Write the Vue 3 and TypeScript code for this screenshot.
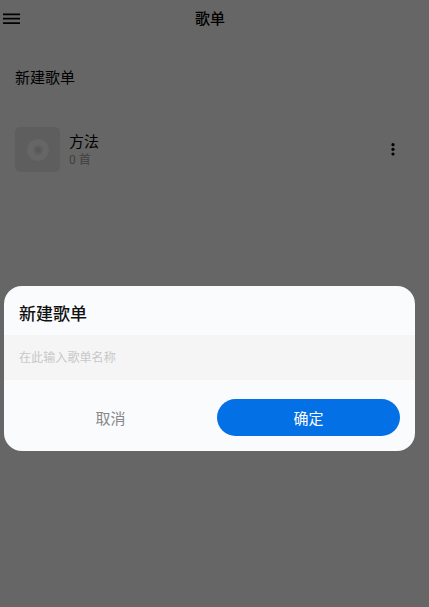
<script setup lang="ts">
interface Playlist { name: string; count: number }
const playlists: Playlist[] = [{ name: '方法', count: 0 }]
</script>

<template>
  <div class="page">
    <header class="header">
      <svg class="menu" width="24" height="24" viewBox="0 0 24 24">
        <path d="M3 7.3h17M3 11.7h17M3 16.2h17" stroke="#000" stroke-width="1.7" fill="none" />
      </svg>
      <h1 class="title">歌单</h1>
    </header>
    <div class="new-row">新建歌单</div>
    <ul class="list">
      <li v-for="p in playlists" :key="p.name" class="item">
        <div class="cover">
          <svg width="24" height="24" viewBox="0 0 24 24">
            <circle cx="12" cy="12" r="10.8" fill="#fff" />
            <circle cx="12" cy="12" r="4.8" fill="#ebebeb" />
            <circle cx="12" cy="12" r="2.4" fill="#dcdcdc" />
          </svg>
        </div>
        <div class="meta">
          <div class="name">{{ p.name }}</div>
          <div class="count">{{ p.count }} 首</div>
        </div>
        <svg class="more" width="6" height="16" viewBox="0 0 6 16">
          <circle cx="3" cy="2.7" r="1.6" fill="#000" />
          <circle cx="3" cy="7.3" r="1.6" fill="#000" />
          <circle cx="3" cy="12" r="1.6" fill="#000" />
        </svg>
      </li>
    </ul>

    <div class="overlay">
      <div class="dialog">
        <div class="dialog-title">新建歌单</div>
        <input class="field" type="text" placeholder="在此输入歌单名称" />
        <div class="actions">
          <button class="btn cancel" type="button">取消</button>
          <button class="btn ok" type="button">确定</button>
        </div>
      </div>
    </div>
  </div>
</template>

<style scoped>
.page {
  position: relative;
  width: 429px;
  height: 607px;
  overflow: hidden;
  background: #fff;
  font-family: Roboto, "Noto Sans CJK SC", sans-serif;
  color: #000;
}
.header {
  position: relative;
  display: flex;
  align-items: center;
  justify-content: center;
  height: 38px;
  padding-right: 9px;
  padding-bottom: 3px;
  box-sizing: border-box;
}
.menu {
  position: absolute;
  left: 0;
  top: 7px;
}
.title {
  margin: 0;
  font-size: 15px;
  font-weight: 500;
}
.new-row {
  display: flex;
  align-items: center;
  height: 78px;
  padding-left: 15px;
  padding-bottom: 2px;
  box-sizing: border-box;
  font-size: 15px;
}
.list {
  list-style: none;
  margin: 0;
  padding: 11px 15px 0;
}
.item {
  display: flex;
  align-items: center;
  height: 45px;
}
.cover {
  display: flex;
  align-items: center;
  justify-content: center;
  width: 45px;
  height: 45px;
  border-radius: 5px;
  background: #ebebeb;
}
.meta {
  flex: 1;
  margin-left: 9px;
}
.name {
  font-size: 15px;
  line-height: 20px;
  padding-top: 1px;
}
.count {
  font-size: 12px;
  line-height: 17px;
  color: #a0a0a0;
}
.more {
  margin-right: 18px;
}
.overlay {
  position: absolute;
  inset: 0;
  background: rgba(0, 0, 0, 0.6);
}
.dialog {
  position: absolute;
  left: 4px;
  top: 286px;
  width: 411px;
  height: 165px;
  border-radius: 18px;
  background: #fafbfd;
  overflow: hidden;
}
.dialog-title {
  display: flex;
  align-items: center;
  height: 49px;
  padding: 3px 15px 0;
  box-sizing: border-box;
  font-size: 17px;
  font-weight: 500;
  color: #111;
}
.field {
  display: block;
  width: 100%;
  height: 45px;
  box-sizing: border-box;
  padding: 0 15px;
  border: 0;
  outline: 0;
  background: #f5f5f5;
  font-family: inherit;
  font-size: 12.1px;
}
.field::placeholder {
  color: #c8c8c8;
  opacity: 1;
}
.actions {
  display: flex;
  gap: 15px;
  padding: 19px 15px 0;
}
.btn {
  flex: 1;
  height: 37px;
  border: 0;
  border-radius: 19px;
  padding: 0 0 1px;
  font-family: inherit;
  font-size: 15px;
}
.cancel {
  background: transparent;
  color: #888;
}
.ok {
  background: #0470e6;
  color: #fff;
}
</style>
